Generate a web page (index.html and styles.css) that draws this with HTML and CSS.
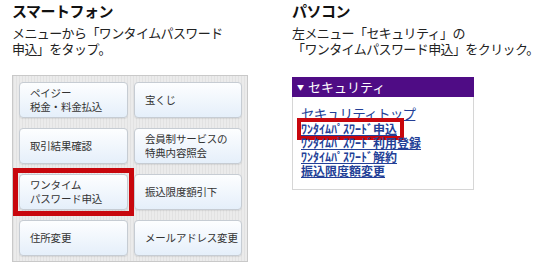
FILE: index.html
```html
<!DOCTYPE html>
<html lang="ja">
<head>
  <meta charset="UTF-8">
  <title>ワンタイムパスワード申込</title>
  <link rel="stylesheet" href="styles.css">
</head>
<body>

  <div class="page">
    <!-- スマートフォン -->
    <section class="col col-phone">
      <h2 class="title">スマートフォン</h2>
      <p class="desc">メニューから「ワンタイムパスワード<br>申込」をタップ。</p>

      <div class="phone-menu">
        <div class="tile">ペイジー<br>税金・料金払込</div>
        <div class="tile">宝くじ</div>
        <div class="tile">取引結果確認</div>
        <div class="tile">会員制サービスの<br>特典内容照会</div>
        <div class="tile marked">ワンタイム<br>パスワード申込</div>
        <div class="tile">振込限度額引下</div>
        <div class="tile">住所変更</div>
        <div class="tile">メールアドレス変更</div>
      </div>
    </section>

    <!-- パソコン -->
    <section class="col col-pc">
      <h2 class="title">パソコン</h2>
      <p class="desc">左メニュー「セキュリティ」の<br>「ワンタイムパスワード申込」をクリック。</p>

      <div class="pc-menu">
        <div class="pc-menu-head"><span class="arrow">▼</span>セキュリティ</div>
        <ul class="pc-links">
          <li class="top-link"><a href="#">セキュリティトップ</a></li>
          <li><a href="#" class="marked">ﾜﾝﾀｲﾑﾊﾟｽﾜｰﾄﾞ申込</a></li>
          <li><a href="#">ﾜﾝﾀｲﾑﾊﾟｽﾜｰﾄﾞ利用登録</a></li>
          <li><a href="#">ﾜﾝﾀｲﾑﾊﾟｽﾜｰﾄﾞ解約</a></li>
          <li><a href="#">振込限度額変更</a></li>
        </ul>
      </div>
    </section>
  </div>

</body>
</html>
```

FILE: styles.css
```css
body {
  margin: 0;
  background-color: #fff;
  font-family: "Noto Sans CJK JP", "Noto Sans", sans-serif;
  color: #222;
  overflow: hidden;
}

.page {
  display: flex;
  padding-left: 12px;
  padding-top: 1px;
}

.col-phone {
  width: 280px;
  flex-shrink: 0;
}

.col-pc {
  width: 258px;
  flex-shrink: 0;
}

.title {
  margin: 0;
  font-size: 15px;
  line-height: 20px;
  font-weight: bold;
  letter-spacing: -0.5px;
  color: #111;
}

.desc {
  margin: 4px 0 0;
  font-size: 13px;
  line-height: 16px;
  letter-spacing: -0.6px;
  color: #222;
  white-space: nowrap;
}

/* スマホのメニュー */
.phone-menu {
  margin-top: 18px;
  width: 223px;
  padding: 6px 5px 5px 6px;
  border: 1px solid #c9c9c9;
  display: grid;
  grid-template-columns: 109px 108px;
  grid-auto-rows: 36px;
  column-gap: 6px;
  row-gap: 10px;
  background: repeating-linear-gradient(90deg, #e2e2e2 0 1px, #ebebeb 1px 3px);
}

.tile {
  position: relative;
  display: flex;
  align-items: center;
  padding-left: 10px;
  font-size: 10.5px;
  line-height: 14px;
  letter-spacing: -0.2px;
  white-space: nowrap;
  color: #333;
  border: 1px solid #c6ccd3;
  border-radius: 4px;
  background: linear-gradient(#fdfeff, #e5effa);
  box-shadow: 0 1px 1px rgba(0, 0, 0, 0.08);
}

.tile.marked::after {
  content: "";
  position: absolute;
  top: -7px;
  left: -7px;
  right: -7px;
  bottom: -7px;
  border: 5px solid #c8070d;
}

/* PCのメニュー */
.pc-menu {
  margin-top: 20px;
  width: 180px;
  height: 112px;
  border: 1px solid #d6d6d6;
  border-top: none;
}

.pc-menu-head {
  height: 20px;
  margin: 0 -1px;
  padding-left: 5px;
  background-color: #4f0c85;
  color: #fff;
  font-size: 13px;
  line-height: 20px;
}

.arrow {
  font-size: 7px;
  margin-right: 4px;
  vertical-align: 2px;
}

.pc-links {
  list-style: none;
  margin: 0;
  padding: 8px 0 0 8px;
}

.pc-links li {
  height: 14px;
  font-size: 12px;
  line-height: 14px;
  font-weight: bold;
}

.pc-links a {
  display: inline-block;
  color: #233f97;
  text-decoration: underline;
}

.pc-links .top-link {
  height: 16px;
  font-size: 13.5px;
  line-height: 16px;
  font-weight: normal;
  letter-spacing: -0.7px;
  margin-bottom: 1px;
}

.pc-links a.marked {
  padding-right: 3px;
  outline: 4px solid #c8070d;
}
```
